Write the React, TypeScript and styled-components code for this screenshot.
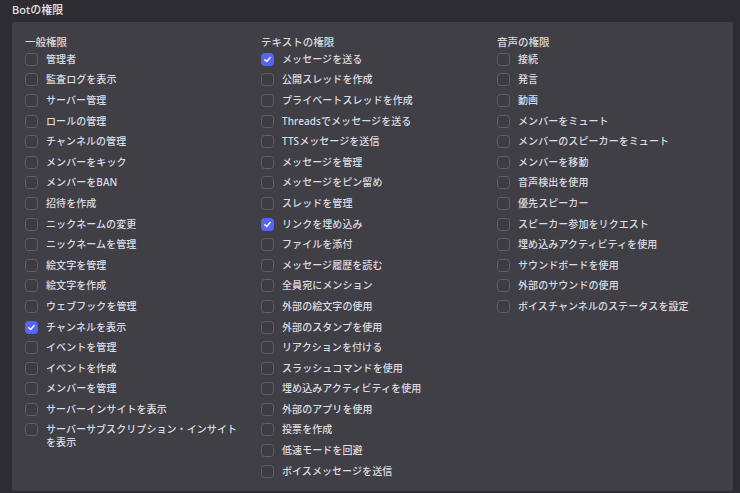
import React from "react";
import styled, { createGlobalStyle } from "styled-components";

const Global = createGlobalStyle`
  html, body { margin: 0; padding: 0; background: #2d2c32; }
  body {
    font-family: "Noto Sans", "Noto Sans CJK JP", sans-serif;
    color: #dddde1;
    -webkit-font-smoothing: antialiased;
  }
`;

const Page = styled.div`
  width: 740px;
  height: 493px;
  box-sizing: border-box;
  padding: 0 7px 2px 12px;
  display: flex;
  flex-direction: column;
  overflow: hidden;
`;

const Title = styled.div`
  height: 22px;
  line-height: 20px;
  font-size: 11px;
  font-weight: 500;
  color: #e2e2e5;
`;

const Panel = styled.div`
  flex: 1;
  background: #403f46;
  border-radius: 2px;
  box-sizing: border-box;
  padding: 13px 0 0 13px;
  display: grid;
  grid-template-columns: repeat(3, 236px);
  align-items: start;
`;

const Column = styled.div`
  display: flex;
  flex-direction: column;
  padding-right: 16px;
`;

const Heading = styled.div`
  font-size: 10.5px;
  line-height: 14px;
  font-weight: 500;
  color: #d8d8dc;
`;

const Row = styled.label`
  display: flex;
  align-items: flex-start;
  gap: 8px;
  padding: 3.8px 0;
  font-size: 10px;
  line-height: 13px;
  font-weight: 500;
  letter-spacing: 0.07px;
  color: #dcdce0;
`;

const Box = styled.span<{ $checked?: boolean }>`
  flex: 0 0 auto;
  width: 13px;
  height: 13px;
  box-sizing: border-box;
  border-radius: 3.5px;
  border: 1px solid ${(p) => (p.$checked ? "#5865f2" : "#605f66")};
  background: ${(p) => (p.$checked ? "#5865f2" : "#3d3c43")};
  display: flex;
  align-items: center;
  justify-content: center;
`;

const Label = styled.span`
  flex: 1;
  min-width: 0;
  word-break: break-all;
`;

type Item = { label: string; checked?: boolean };

const columns: { title: string; items: Item[] }[] = [
  {
    title: "一般権限",
    items: [
      { label: "管理者" },
      { label: "監査ログを表示" },
      { label: "サーバー管理" },
      { label: "ロールの管理" },
      { label: "チャンネルの管理" },
      { label: "メンバーをキック" },
      { label: "メンバーをBAN" },
      { label: "招待を作成" },
      { label: "ニックネームの変更" },
      { label: "ニックネームを管理" },
      { label: "絵文字を管理" },
      { label: "絵文字を作成" },
      { label: "ウェブフックを管理" },
      { label: "チャンネルを表示", checked: true },
      { label: "イベントを管理" },
      { label: "イベントを作成" },
      { label: "メンバーを管理" },
      { label: "サーバーインサイトを表示" },
      { label: "サーバーサブスクリプション・インサイトを表示" },
    ],
  },
  {
    title: "テキストの権限",
    items: [
      { label: "メッセージを送る", checked: true },
      { label: "公開スレッドを作成" },
      { label: "プライベートスレッドを作成" },
      { label: "Threadsでメッセージを送る" },
      { label: "TTSメッセージを送信" },
      { label: "メッセージを管理" },
      { label: "メッセージをピン留め" },
      { label: "スレッドを管理" },
      { label: "リンクを埋め込み", checked: true },
      { label: "ファイルを添付" },
      { label: "メッセージ履歴を読む" },
      { label: "全員宛にメンション" },
      { label: "外部の絵文字の使用" },
      { label: "外部のスタンプを使用" },
      { label: "リアクションを付ける" },
      { label: "スラッシュコマンドを使用" },
      { label: "埋め込みアクティビティを使用" },
      { label: "外部のアプリを使用" },
      { label: "投票を作成" },
      { label: "低速モードを回避" },
      { label: "ボイスメッセージを送信" },
    ],
  },
  {
    title: "音声の権限",
    items: [
      { label: "接続" },
      { label: "発言" },
      { label: "動画" },
      { label: "メンバーをミュート" },
      { label: "メンバーのスピーカーをミュート" },
      { label: "メンバーを移動" },
      { label: "音声検出を使用" },
      { label: "優先スピーカー" },
      { label: "スピーカー参加をリクエスト" },
      { label: "埋め込みアクティビティを使用" },
      { label: "サウンドボードを使用" },
      { label: "外部のサウンドの使用" },
      { label: "ボイスチャンネルのステータスを設定" },
    ],
  },
];

const Check = () => (
  <svg width="9" height="9" viewBox="0 0 10 10" fill="none">
    <path d="M2 5.2 L4.1 7.2 L8 2.8" stroke="#fff" strokeWidth="1.6" strokeLinecap="round" strokeLinejoin="round" />
  </svg>
);

export default function App() {
  return (
    <>
      <Global />
      <Page>
        <Title>Botの権限</Title>
        <Panel>
          {columns.map((col) => (
            <Column key={col.title}>
              <Heading>{col.title}</Heading>
              {col.items.map((it) => (
                <Row key={it.label}>
                  <Box $checked={it.checked}>{it.checked && <Check />}</Box>
                  <Label>{it.label}</Label>
                </Row>
              ))}
            </Column>
          ))}
        </Panel>
      </Page>
    </>
  );
}
